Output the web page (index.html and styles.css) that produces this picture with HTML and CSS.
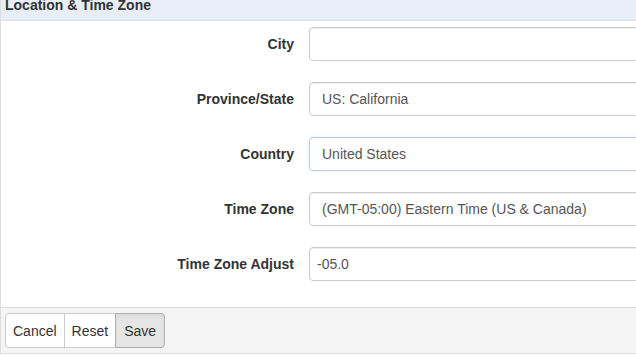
FILE: index.html
```html
<!DOCTYPE html>
<html>
<head>
<meta charset="utf-8">
<link rel="stylesheet" href="styles.css">
</head>
<body>
<div class="panel">
  <div class="panel-heading">Location &amp; Time Zone</div>
  <div class="panel-body">
    <div class="form-row">
      <label class="label">City</label>
      <div class="input"></div>
    </div>
    <div class="form-row">
      <label class="label">Province/State</label>
      <div class="input">US: California</div>
    </div>
    <div class="form-row">
      <label class="label">Country</label>
      <div class="input focus">United States</div>
    </div>
    <div class="form-row">
      <label class="label">Time Zone</label>
      <div class="input">(GMT-05:00) Eastern Time (US &amp; Canada)</div>
    </div>
    <div class="form-row">
      <label class="label">Time Zone Adjust</label>
      <div class="input narrow-pad">-05.0</div>
    </div>
  </div>
  <div class="panel-footer">
    <div class="btn-group">
      <button class="btn">Cancel</button>
      <button class="btn">Reset</button>
      <button class="btn active">Save</button>
    </div>
  </div>
</div>
</body>
</html>
```

FILE: styles.css
```css
html, body {
  margin: 0;
  padding: 0;
  background: #fff;
  overflow: hidden;
}
body {
  font-family: "Liberation Sans", Arial, sans-serif;
  font-size: 14px;
  color: #333;
  width: 636px;
  height: 356px;
}
.panel {
  width: 900px;
  border-left: 1px solid #ddd;
  box-sizing: border-box;
}
.panel-heading {
  background: #e8eef7;
  border-bottom: 1px solid #dcdfe3;
  font-weight: bold;
  line-height: 12px;
  height: 11px;
  padding: 0 4px 10px;
  margin-top: -1px;
  overflow: hidden;
  color: #333;
}
.panel-body {
  padding: 6px 0 5px;
}
.form-row {
  display: flex;
  align-items: center;
  gap: 15px;
  margin-bottom: 21px;
}
.label {
  width: 293px;
  text-align: right;
  font-weight: bold;
  line-height: 20px;
}
.input {
  flex: 1;
  height: 34px;
  box-sizing: border-box;
  border: 1px solid #ccc;
  border-radius: 4px;
  padding: 6px 12px;
  line-height: 20px;
  color: #555;
  box-shadow: inset 0 1px 1px rgba(0,0,0,0.075);
}
.input.focus {
  border-color: #b9cde8;
  box-shadow: inset 0 1px 1px rgba(0,0,0,0.04), 0 0 3px rgba(102,175,233,0.25);
}
.input.narrow-pad {
  padding-left: 7px;
}
.panel-footer {
  background: #f5f5f5;
  border-top: 1px solid #ddd;
  border-bottom: 1px solid #ddd;
  padding: 5px 4px 5px;
  height: 35px;
}
.btn-group {
  display: flex;
}
.btn {
  font-family: "Liberation Sans", Arial, sans-serif;
  font-size: 14px;
  color: #333;
  background: #fff;
  border: 1px solid #ccc;
  height: 35px;
  line-height: 20px;
  padding: 6px 7px;
  margin: 0 0 0 -1px;
  border-radius: 0;
}
.btn:first-child {
  margin-left: 0;
  border-radius: 4px 0 0 4px;
}
.btn:last-child {
  border-radius: 0 4px 4px 0;
  padding: 6px 8px;
}
.btn.active {
  background: #e6e6e6;
  border-color: #adadad;
  box-shadow: inset 0 3px 5px rgba(0,0,0,0.05);
}
```
